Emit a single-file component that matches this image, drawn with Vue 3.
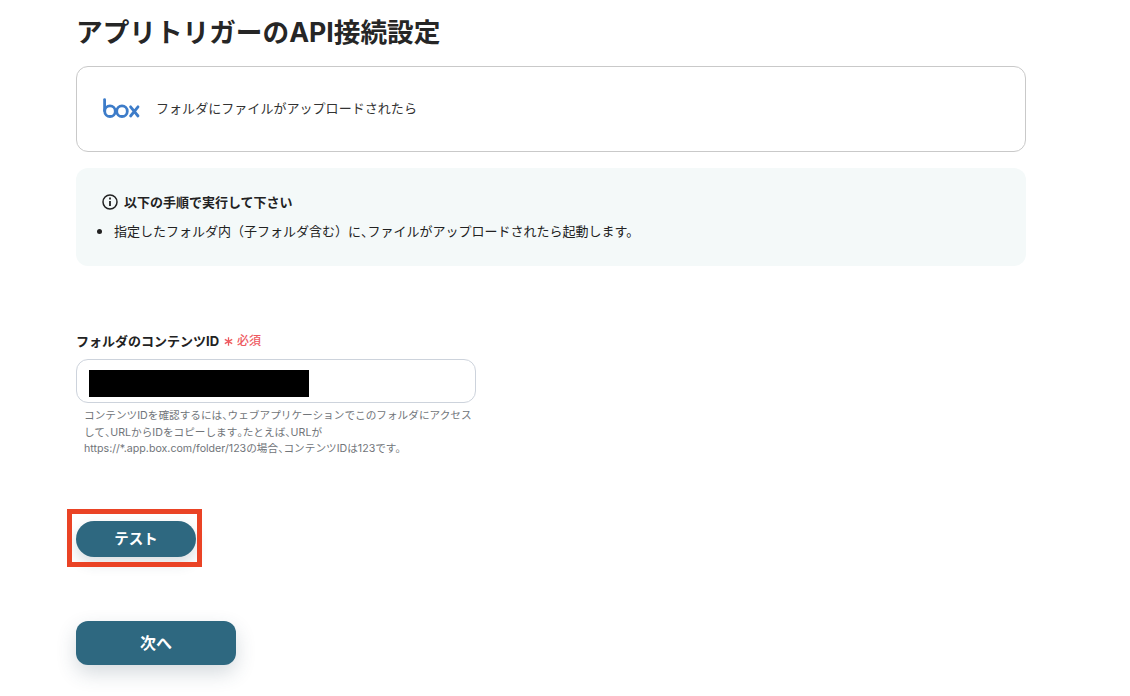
<script setup>
const step = [
  { t: '指定したフォルダ内（子フォルダ含む）に', p: false },
  { t: '、', p: true },
  { t: 'ファイルがアップロードされたら起動します。', p: false },
]
const hintLines = [
  [
    { t: 'コンテンツIDを確認するには', p: false },
    { t: '、', p: true },
    { t: 'ウェブアプリケーションでこのフォルダにアクセス', p: false },
  ],
  [
    { t: 'して', p: false },
    { t: '、', p: true },
    { t: 'URLからIDをコピーします', p: false },
    { t: '。', p: true },
    { t: 'たとえば', p: false },
    { t: '、', p: true },
    { t: 'URLが', p: false },
  ],
  [
    { t: 'https://*.app.box.com/folder/123の場合', p: false },
    { t: '、', p: true },
    { t: 'コンテンツIDは123です。', p: false },
  ],
]
</script>

<template>
  <main class="page">
    <h1 class="title">アプリトリガーのAPI接続設定</h1>
    <section class="card">
      <svg class="logo" width="37" height="22" viewBox="0 0 37 22" fill="none" stroke="#3d7cc9" stroke-width="2.8" stroke-linecap="round">
        <path d="M1.6 1.6V12.8" />
        <circle cx="7" cy="13.2" r="5.3" />
        <circle cx="19" cy="13.2" r="5.3" />
        <path d="M27.6 8.8L35 18M35 8.8L27.6 18" />
      </svg>
      <span class="card-text">フォルダにファイルがアップロードされたら</span>
    </section>
    <section class="info">
      <div class="info-head">
        <svg width="16" height="16" viewBox="0 0 16 16" fill="none" stroke="#222" stroke-width="1.5">
          <circle cx="8" cy="8" r="7" />
          <path d="M8 7V12" stroke-width="1.8" />
          <path d="M8 3.6V5.4" stroke-width="1.8" />
        </svg>
        <span>以下の手順で実行して下さい</span>
      </div>
      <ul class="info-list">
        <li><span v-for="(s, i) in step" :key="i" :class="{ tight: s.p }">{{ s.t }}</span></li>
      </ul>
    </section>
    <section class="field">
      <div class="label">
        <span>フォルダのコンテンツID</span>
        <span class="req">
          <svg width="9" height="9" viewBox="0 0 9 9" fill="none" stroke="#ee5a5f" stroke-width="1.3">
            <path d="M4.5 0.3V8.7M0.8 2.4L8.2 6.6M8.2 2.4L0.8 6.6" />
          </svg>
          <span>必須</span>
        </span>
      </div>
      <div class="input"><div class="mask"></div></div>
      <div class="hint">
        <div v-for="(line, n) in hintLines" :key="n" class="hint-line">
          <span v-for="(s, i) in line" :key="i" :class="{ tight: s.p }">{{ s.t }}</span>
        </div>
      </div>
    </section>
    <div class="test-wrap">
      <button class="btn test">テスト</button>
      <div class="frame"></div>
    </div>
    <button class="btn next">次へ</button>
  </main>
</template>

<style scoped>
.page {
  width: 1130px;
  height: 696px;
  box-sizing: border-box;
  padding: 14px 0 0 76px;
  overflow: hidden;
  background: #fff;
  color: #222;
  font-family: Inter, "Noto Sans CJK JP", sans-serif;
}
.tight { font-feature-settings: "halt"; }
.title {
  margin: 0;
  font-size: 26.65px;
  line-height: 36px;
  font-weight: 700;
  color: #262626;
}
.card {
  width: 950px;
  height: 86px;
  box-sizing: border-box;
  margin-top: 16px;
  padding: 0 25px 0 26px;
  display: flex;
  align-items: center;
  gap: 16px;
  border: 1px solid #c9c9c9;
  border-radius: 12px;
}
.logo { flex: none; margin-top: -1px; }
.card-text { font-size: 13.05px; color: #333; padding-bottom: 4px; }
.info {
  width: 950px;
  height: 98px;
  box-sizing: border-box;
  margin-top: 16px;
  padding: 25px 26px 0;
  background: #f4f9f9;
  border-radius: 12px;
}
.info-head {
  display: flex;
  align-items: center;
  gap: 6px;
  font-size: 13px;
  line-height: 18px;
  font-weight: 700;
}
.info-list {
  margin: 10px 0 0;
  padding: 0 0 0 12px;
  font-size: 13px;
  line-height: 18px;
}
.info-list li::marker { font-size: 17px; }
.field { margin-top: 65px; }
.label {
  display: flex;
  align-items: center;
  font-size: 13px;
  line-height: 20px;
  font-weight: 700;
}
.req {
  display: flex;
  align-items: center;
  gap: 4px;
  margin-left: 5px;
  font-size: 12px;
  font-weight: 500;
  color: #ee5a5f;
}
.input {
  width: 400px;
  height: 44px;
  box-sizing: border-box;
  margin-top: 8px;
  padding: 10px 12px;
  border: 1px solid #cdd3dc;
  border-radius: 12px;
}
.mask { width: 220px; height: 27px; background: #000; }
.hint {
  margin: 5px 0 0 8px;
  font-size: 10.65px;
  line-height: 16.7px;
  color: #71757a;
}
.hint-line { white-space: nowrap; }
.test-wrap {
  position: relative;
  width: 120px;
  margin-top: 63px;
}
.btn {
  display: block;
  border: 0;
  padding: 0 0 3px;
  background: #2e6880;
  color: #fff;
  font-family: inherit;
  font-weight: 700;
}
.test {
  width: 120px;
  height: 36px;
  font-size: 14.5px;
  border-radius: 18px;
  box-shadow: 0 6px 14px rgba(46, 70, 90, 0.18);
}
.frame {
  position: absolute;
  left: -9px;
  top: -12px;
  width: 135px;
  height: 58px;
  box-sizing: border-box;
  border: 5px solid #ea4325;
}
.next {
  width: 160px;
  height: 44px;
  font-size: 16px;
  margin-top: 64px;
  border-radius: 12px;
  box-shadow: 0 8px 20px rgba(46, 70, 90, 0.2);
}
</style>
